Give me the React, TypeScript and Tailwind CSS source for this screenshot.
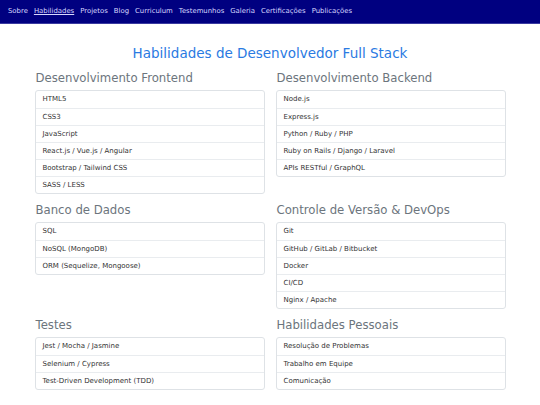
const NAV = ['Sobre', 'Habilidades', 'Projetos', 'Blog', 'Curriculum', 'Testemunhos', 'Galeria', 'Certificações', 'Publicações'];

const SECTIONS: { title: string; items: string[] }[] = [
  {
    title: 'Desenvolvimento Frontend',
    items: ['HTML5', 'CSS3', 'JavaScript', 'React.js / Vue.js / Angular', 'Bootstrap / Tailwind CSS', 'SASS / LESS'],
  },
  {
    title: 'Desenvolvimento Backend',
    items: ['Node.js', 'Express.js', 'Python / Ruby / PHP', 'Ruby on Rails / Django / Laravel', 'APIs RESTful / GraphQL'],
  },
  {
    title: 'Banco de Dados',
    items: ['SQL', 'NoSQL (MongoDB)', 'ORM (Sequelize, Mongoose)'],
  },
  {
    title: 'Controle de Versão & DevOps',
    items: ['Git', 'GitHub / GitLab / Bitbucket', 'Docker', 'CI/CD', 'Nginx / Apache'],
  },
  {
    title: 'Testes',
    items: ['Jest / Mocha / Jasmine', 'Selenium / Cypress', 'Test-Driven Development (TDD)'],
  },
  {
    title: 'Habilidades Pessoais',
    items: ['Resolução de Problemas', 'Trabalho em Equipe', 'Comunicação'],
  },
];

function SkillCard({ title, items }: { title: string; items: string[] }) {
  return (
    <div>
      <h3 className="text-[11.7px] leading-[16px] text-[#6c757d] mb-[4px] pl-[1px]">{title}</h3>
      <ul className="border border-[#dee2e6] rounded-[3px] bg-white">
        {items.map((item, i) => (
          <li
            key={item}
            className={`h-[17px] flex items-center px-[7px] text-[7px] text-[#333] ${
              i > 0 ? 'border-t border-[#e9ecef]' : ''
            }`}
          >
            {item}
          </li>
        ))}
      </ul>
    </div>
  );
}

export default function App() {
  return (
    <div className="min-h-[405px] bg-white" style={{ fontFamily: '"DejaVu Sans", Verdana, sans-serif' }}>
      {/* Navbar */}
      <nav className="h-[24px] bg-[#000080] border-b border-[#3a3aa0] flex items-center px-[8px] gap-[6px]">
        {NAV.map((n) => (
          <a
            key={n}
            className={`text-[6.9px] text-[#d8d8ff] ${n === 'Habilidades' ? 'underline' : ''}`}
          >
            {n}
          </a>
        ))}
      </nav>

      <main className="w-[471px] mx-auto pt-[20px]">
        <h1 className="text-center text-[13.5px] leading-[18px] text-[#2a7ae2] mb-[8px]">
          Habilidades de Desenvolvedor Full Stack
        </h1>
        <div className="grid grid-cols-2 gap-x-[11px] gap-y-[8px]">
          {SECTIONS.map((s) => (
            <SkillCard key={s.title} title={s.title} items={s.items} />
          ))}
        </div>
      </main>
    </div>
  );
}
